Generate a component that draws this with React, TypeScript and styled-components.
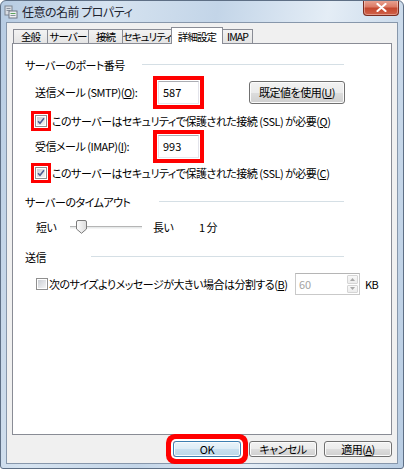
import React from 'react';
import styled, { createGlobalStyle } from 'styled-components';

const GlobalStyle = createGlobalStyle`
  html, body {
    margin: 0;
    padding: 0;
  }
  body {
    font-family: 'Noto Sans CJK JP', 'Noto Sans', sans-serif;
    font-size: 11px;
    font-feature-settings: 'palt';
    letter-spacing: -0.5px;
    color: #000;
  }
`;

const Window = styled.div`
  width: 404px;
  height: 469px;
  box-sizing: border-box;
  display: flex;
  flex-direction: column;
  border: 1px solid #5e6f85;
  border-radius: 6px 6px 3px 3px;
  overflow: hidden;
  background: linear-gradient(
    100deg,
    #b6cbe2 0%,
    #d6e3f0 22%,
    #c3d5e8 45%,
    #e4edf6 68%,
    #c9d9ea 85%,
    #b9cde3 100%
  );
`;

const TitleBar = styled.div`
  height: 21px;
  display: flex;
  align-items: flex-start;
  padding-left: 3px;
`;

const TitleIcon = styled.svg`
  margin-top: 4px;
  flex: none;
`;

const TitleText = styled.div`
  margin-left: 4px;
  margin-top: 2px;
  line-height: 17px;
  font-size: 12px;
  color: #1e2430;
`;

const CloseButton = styled.div`
  margin-left: auto;
  margin-right: 4px;
  margin-top: -1px;
  width: 36px;
  height: 16px;
  box-sizing: border-box;
  border: 1px solid #7a2c20;
  border-top: none;
  border-radius: 0 0 4px 4px;
  background: linear-gradient(#e9a796 0%, #dc7b66 45%, #c4482f 55%, #d0624a 100%);
  box-shadow: inset 0 0 0 1px rgba(255, 255, 255, 0.35);
  display: flex;
  align-items: center;
  justify-content: center;
`;

const Frame = styled.div`
  flex: 1;
  display: flex;
  padding: 0 5px 4px 5px;
`;

const Client = styled.div`
  flex: 1;
  display: flex;
  flex-direction: column;
  background: #f0f0f0;
  border: 1px solid #8797ab;
  padding: 4px 5px 6px 5px;
`;

const TabStrip = styled.div`
  height: 16px;
  display: flex;
  align-items: flex-end;
  padding-left: 1px;
`;

const Tab = styled.div<{ $w: number; $active?: boolean }>`
  width: ${(p) => p.$w}px;
  height: ${(p) => (p.$active ? 17 : 14)}px;
  box-sizing: border-box;
  flex: none;
  margin-right: -1px;
  margin-bottom: ${(p) => (p.$active ? -1 : 0)}px;
  border: 1px solid #898c95;
  border-bottom: none;
  background: ${(p) => (p.$active ? '#fff' : 'linear-gradient(#f3f3f3, #e4e4e4)')};
  position: relative;
  z-index: ${(p) => (p.$active ? 2 : 1)};
  display: flex;
  align-items: center;
  justify-content: center;
  font-size: 10.5px;
  letter-spacing: -0.9px;
  line-height: 13px;
  padding-top: ${(p) => (p.$active ? 1 : 0)}px;
  white-space: nowrap;
`;

const Panel = styled.div`
  flex: 1;
  background: #fff;
  border: 1px solid #898c95;
  padding: 13px 12px 0 12px;
  display: flex;
  flex-direction: column;
`;

const GroupHeader = styled.div<{ $top: number; $label: number }>`
  margin-top: ${(p) => p.$top}px;
  height: 16px;
  display: flex;
  align-items: center;
  margin-right: 35px;

  & > span {
    width: ${(p) => p.$label}px;
    flex: none;
    white-space: nowrap;
    line-height: 16px;
  }
  &::after {
    content: '';
    flex: 1;
    height: 1px;
    margin-top: -1px;
    background: #d5dfe5;
  }
`;

const Row = styled.div<{ $top: number; $h: number; $indent: number }>`
  margin-top: ${(p) => p.$top}px;
  height: ${(p) => p.$h}px;
  padding-left: ${(p) => p.$indent}px;
  display: flex;
  align-items: center;
  white-space: nowrap;
`;

const Label = styled.span<{ $w?: number }>`
  ${(p) => (p.$w ? `width: ${p.$w}px; flex: none;` : '')}
  line-height: 16px;
  white-space: nowrap;
`;

const Key = styled.span`
  text-decoration: underline;
  text-underline-offset: 1px;
`;

const TextBox = styled.div<{ $marked?: boolean }>`
  width: 41px;
  height: 23px;
  box-sizing: border-box;
  flex: none;
  border: 1px solid #e2e3ea;
  border-top-color: #abadb3;
  border-bottom-color: #e3e9ef;
  background: #fff;
  display: flex;
  align-items: center;
  padding-left: 4px;
  letter-spacing: 0;
  box-shadow: ${(p) => (p.$marked ? '0 0 0 1px #fff, 0 0 0 5px #f00' : 'none')};
`;

const Button = styled.div<{ $w: number; $h: number; $default?: boolean; $marked?: boolean }>`
  width: ${(p) => p.$w}px;
  height: ${(p) => p.$h}px;
  box-sizing: border-box;
  flex: none;
  border: 1px solid ${(p) => (p.$default ? '#3c7fb1' : '#707070')};
  border-radius: 3px;
  background: ${(p) =>
    p.$default
      ? 'linear-gradient(#eaf4fa 0%, #dcecf6 50%, #c9e0ef 50%, #bcd6e8 100%)'
      : 'linear-gradient(#f2f2f2 0%, #ebebeb 50%, #dddddd 50%, #cfcfcf 100%)'};
  display: flex;
  align-items: center;
  justify-content: center;
  line-height: 13px;
  box-shadow: ${(p) =>
    p.$marked
      ? 'inset 0 0 0 1px #f8fbfd, 0 0 0 2px #fff, 0 0 0 7px #f00'
      : 'inset 0 0 0 1px #fbfbfb'};
`;

const CheckBox = styled.span<{ $marked?: boolean }>`
  width: 12px;
  height: 12px;
  box-sizing: border-box;
  flex: none;
  border: 1px solid #8f8f8f;
  background: #fff;
  padding: 1px;
  display: flex;
  box-shadow: ${(p) => (p.$marked ? '0 0 0 1px #fff, 0 0 0 4px #f00' : 'none')};

  & > span {
    flex: 1;
    background: linear-gradient(135deg, #cbcfd5, #f4f4f4);
    display: flex;
    align-items: center;
    justify-content: center;
  }
`;

const Track = styled.div`
  width: 72px;
  height: 3px;
  box-sizing: border-box;
  flex: none;
  border-top: 1px solid #b5b5b5;
  background: #e7eaea;
  border-bottom: 1px solid #f4f4f4;
  position: relative;
`;

const Thumb = styled.svg`
  position: absolute;
  left: 6px;
  top: -7px;
`;

const SpinBox = styled.div`
  width: 65px;
  height: 22px;
  box-sizing: border-box;
  flex: none;
  border: 1px solid #c9c9c9;
  border-top-color: #b5b5b5;
  background: #fff;
  display: flex;
  color: #a3a3a3;
`;

const SpinValue = styled.div`
  flex: 1;
  padding-left: 3px;
  line-height: 20px;
  letter-spacing: 0;
`;

const SpinButtons = styled.div`
  width: 11px;
  display: flex;
  flex-direction: column;
  gap: 1px;
  padding: 1px 1px 1px 0;
`;

const SpinArrow = styled.div`
  flex: 1;
  border: 1px solid #d5d5d5;
  border-radius: 1px;
  background: linear-gradient(#f8f8f8, #ececec);
  display: flex;
  align-items: center;
  justify-content: center;
`;

const ButtonBar = styled.div`
  margin-top: 6px;
  display: flex;
  justify-content: flex-end;
  gap: 7px;
`;

const Check = () => (
  <svg width="8" height="8" viewBox="0 0 8 8">
    <path d="M1 4.2 L3 6.3 L7 1.3" fill="none" stroke="#4b5c92" strokeWidth="1.5" />
  </svg>
);

const SecureCheck: React.FC<{ top: number; mark: string }> = ({ top, mark }) => (
  <Row $top={top} $h={16} $indent={10}>
    <CheckBox $marked>
      <span>
        <Check />
      </span>
    </CheckBox>
    <Label style={{ marginLeft: 5 }}>
      このサーバーはセキュリティで保護された接続 (SSL) が必要(<Key>{mark}</Key>)
    </Label>
  </Row>
);

const App: React.FC = () => {
  const tabs = [
    { label: '全般', w: 35 },
    { label: 'サーバー', w: 42 },
    { label: '接続', w: 35 },
    { label: 'セキュリティ', w: 50 },
    { label: '詳細設定', w: 52, active: true },
    { label: 'IMAP', w: 31 },
  ];

  return (
    <>
      <GlobalStyle />
      <Window>
        <TitleBar>
          <TitleIcon width="14" height="14" viewBox="0 0 14 14">
            <rect x="1" y="1" width="7" height="9" fill="#d9dde3" stroke="#7d8591" />
            <rect x="2.5" y="3" width="4" height="1" fill="#8a929e" />
            <rect x="2.5" y="5" width="4" height="1" fill="#8a929e" />
            <rect x="5" y="6" width="8" height="7" fill="#eef0f2" stroke="#6f7784" />
            <rect x="6.5" y="8" width="5" height="1" fill="#59a35a" />
            <rect x="6.5" y="10" width="5" height="1" fill="#8a929e" />
          </TitleIcon>
          <TitleText>任意の名前 プロパティ</TitleText>
          <CloseButton>
            <svg width="11" height="9" viewBox="0 0 11 9">
              <path
                d="M1.5 1 L9.5 8 M9.5 1 L1.5 8"
                stroke="#fff"
                strokeWidth="2.2"
                strokeLinecap="round"
              />
            </svg>
          </CloseButton>
        </TitleBar>
        <Frame>
          <Client>
            <TabStrip>
              {tabs.map((t) => (
                <Tab key={t.label} $w={t.w} $active={t.active}>
                  {t.label}
                </Tab>
              ))}
            </TabStrip>
            <Panel>
              <GroupHeader $top={0} $label={117}>
                <span>サーバーのポート番号</span>
              </GroupHeader>

              <Row $top={7} $h={24} $indent={10}>
                <Label $w={123}>
                  送信メール (SMTP)(<Key>O</Key>):
                </Label>
                <TextBox $marked>587</TextBox>
                <Button $w={96} $h={23} style={{ marginLeft: 50 }}>
                  既定値を使用(<Key>U</Key>)
                </Button>
              </Row>

              <SecureCheck top={9} mark="Q" />

              <Row $top={5} $h={24} $indent={10}>
                <Label $w={123}>
                  受信メール (IMAP)(<Key>I</Key>):
                </Label>
                <TextBox $marked>993</TextBox>
              </Row>

              <SecureCheck top={7} mark="C" />

              <GroupHeader $top={13} $label={134}>
                <span>サーバーのタイムアウト</span>
              </GroupHeader>

              <Row $top={7} $h={20} $indent={11}>
                <Label $w={34}>短い</Label>
                <Track>
                  <Thumb width="11" height="14" viewBox="0 0 11 14">
                    <defs>
                      <linearGradient id="thumbFill" x1="0" y1="0" x2="1" y2="0">
                        <stop offset="0" stopColor="#fdfdfd" />
                        <stop offset="1" stopColor="#dcdcdc" />
                      </linearGradient>
                    </defs>
                    <path
                      d="M2 0.5 H9 A1.5 1.5 0 0 1 10.5 2 V9 L5.5 13.3 L0.5 9 V2 A1.5 1.5 0 0 1 2 0.5 Z"
                      fill="url(#thumbFill)"
                      stroke="#7b7b7b"
                    />
                  </Thumb>
                </Track>
                <Label $w={46} style={{ marginLeft: 11 }}>
                  長い
                </Label>
                <Label>1 分</Label>
              </Row>

              <GroupHeader $top={12} $label={66}>
                <span>送信</span>
              </GroupHeader>

              <Row $top={8} $h={22} $indent={11}>
                <CheckBox>
                  <span />
                </CheckBox>
                <Label $w={246} style={{ marginLeft: 1 }}>
                  次のサイズよりメッセージが大きい場合は分割する(<Key>B</Key>)
                </Label>
                <SpinBox>
                  <SpinValue>60</SpinValue>
                  <SpinButtons>
                    <SpinArrow>
                      <svg width="5" height="3" viewBox="0 0 5 3">
                        <path d="M0 3 L2.5 0 L5 3 Z" fill="#a8a8a8" />
                      </svg>
                    </SpinArrow>
                    <SpinArrow>
                      <svg width="5" height="3" viewBox="0 0 5 3">
                        <path d="M0 0 L2.5 3 L5 0 Z" fill="#a8a8a8" />
                      </svg>
                    </SpinArrow>
                  </SpinButtons>
                </SpinBox>
                <Label style={{ marginLeft: 5 }}>KB</Label>
              </Row>
            </Panel>
            <ButtonBar>
              <Button $w={68} $h={16} $default $marked style={{ marginRight: 1 }}>
                OK
              </Button>
              <Button $w={68} $h={16}>
                キャンセル
              </Button>
              <Button $w={68} $h={16}>
                適用(<Key>A</Key>)
              </Button>
            </ButtonBar>
          </Client>
        </Frame>
      </Window>
    </>
  );
};

export default App;
